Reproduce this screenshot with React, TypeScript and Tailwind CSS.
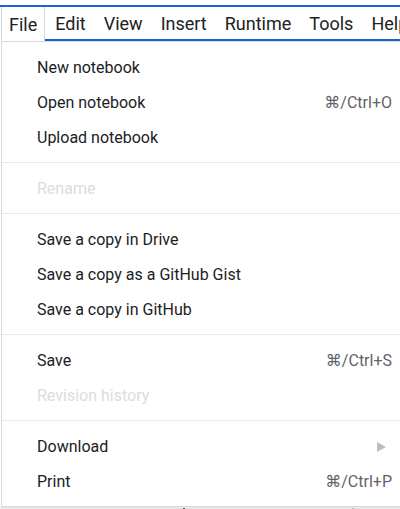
import React from "react";

const font = { fontFamily: "Roboto, 'Noto Sans', 'DejaVu Sans', sans-serif" };

type Item = { label: string; shortcut?: string; disabled?: boolean; submenu?: boolean };

const groups: Item[][] = [
  [
    { label: "New notebook" },
    { label: "Open notebook", shortcut: "⌘/Ctrl+O" },
    { label: "Upload notebook" },
  ],
  [{ label: "Rename", disabled: true }],
  [
    { label: "Save a copy in Drive" },
    { label: "Save a copy as a GitHub Gist" },
    { label: "Save a copy in GitHub" },
  ],
  [
    { label: "Save", shortcut: "⌘/Ctrl+S" },
    { label: "Revision history", disabled: true },
  ],
  [
    { label: "Download", submenu: true },
    { label: "Print", shortcut: "⌘/Ctrl+P" },
  ],
];

function Row({ item }: { item: Item }) {
  return (
    <div className="flex h-[35px] items-center justify-between pl-[35px] pr-[8px]">
      <span
        className={
          "text-[16px] " + (item.disabled ? "text-[#dcdcdc]" : "text-[#202124]")
        }
      >
        {item.label}
      </span>
      {item.shortcut && (
        <span className="text-[16px] text-[#5f6368]">{item.shortcut}</span>
      )}
      {item.submenu && (
        <svg width="9" height="10" viewBox="0 0 9 10" className="mr-[6px]">
          <path d="M0 0 L9 5 L0 10 Z" fill="#bdbdbd" />
        </svg>
      )}
    </div>
  );
}

export default function App() {
  const menus = ["Edit", "View", "Insert", "Runtime", "Tools", "Help"];
  return (
    <div className="relative h-[509px] w-[400px] overflow-hidden bg-[#e6e6e6]" style={font}>
      <div className="bg-white">
        <div className="h-[5px] bg-white" />
        <div className="flex h-[36px] items-stretch border-t-2 border-[#1a62d4] bg-white">
          <div className="relative z-10 ml-px flex items-center border-x border-[#d6d6d6] bg-white px-[7px] text-[18px] text-[#202124]">
            File
          </div>
          <div className="flex flex-1 items-stretch border-b-2 border-[#1a62d4] pl-[1px]">
            {menus.map((m) => (
              <div
                key={m}
                className="flex items-center whitespace-nowrap px-[9px] pt-[1px] text-[18px] text-[#202124]"
              >
                {m}
              </div>
            ))}
          </div>
        </div>
        <div className="ml-px border-l border-t border-b border-[#d9d9d9] bg-white pb-[7px] pt-[8px]">
          {groups.map((g, gi) => (
            <div key={gi}>
              {gi > 0 && (
                <div className="pb-[8px] pt-[7px]">
                  <div className="h-px bg-[#e8e8e8]" />
                </div>
              )}
              {g.map((it) => (
                <Row key={it.label} item={it} />
              ))}
            </div>
          ))}
        </div>
      </div>
      <div className="relative h-[4px]">
        <div className="absolute left-[183px] top-[1px] h-[3px] w-[2px] bg-[#555]" />
        <div className="absolute left-[352px] top-[1px] h-[3px] w-[2px] bg-[#bbb]" />
      </div>
    </div>
  );
}
